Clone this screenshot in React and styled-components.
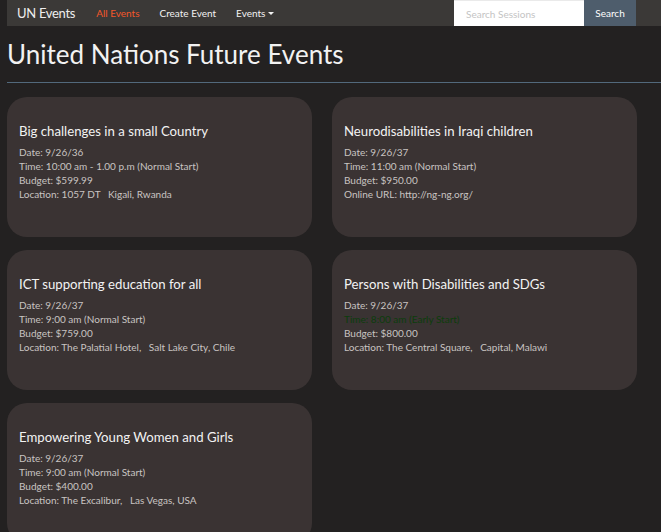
import styled, { createGlobalStyle } from "styled-components";

const GlobalStyle = createGlobalStyle`
  html, body {
    margin: 0;
    padding: 0;
    background: #232121;
    font-family: Lato, "Open Sans", sans-serif;
    color: #eee;
  }
`;

const events = [
  {
    title: "Big challenges in a small Country",
    date: "9/26/36",
    time: "10:00 am - 1.00 p.m (Normal Start)",
    budget: "$599.99",
    place: "Location: 1057 DT\u00a0\u00a0\u00a0Kigali, Rwanda",
  },
  {
    title: "Neurodisabilities in Iraqi children",
    date: "9/26/37",
    time: "11:00 am (Normal Start)",
    budget: "$950.00",
    place: "Online URL: http://ng-ng.org/",
  },
  {
    title: "ICT supporting education for all",
    date: "9/26/37",
    time: "9:00 am (Normal Start)",
    budget: "$759.00",
    place: "Location: The Palatial Hotel,\u00a0\u00a0\u00a0Salt Lake City, Chile",
  },
  {
    title: "Persons with Disabilities and SDGs",
    date: "9/26/37",
    time: "8:00 am (Early Start)",
    early: true,
    budget: "$800.00",
    place: "Location: The Central Square,\u00a0\u00a0\u00a0Capital, Malawi",
  },
  {
    title: "Empowering Young Women and Girls",
    date: "9/26/37",
    time: "9:00 am (Normal Start)",
    budget: "$400.00",
    place: "Location: The Excalibur,\u00a0\u00a0\u00a0Las Vegas, USA",
  },
];

const App = () => {
  return (
    <Page>
      <GlobalStyle />
      <Navbar>
        <Brand>UN Events</Brand>
        <NavLink active>All Events</NavLink>
        <NavLink>Create Event</NavLink>
        <NavLink>
          Events <Caret />
        </NavLink>
        <SearchForm>
          <SearchInput placeholder="Search Sessions" />
          <SearchButton>Search</SearchButton>
        </SearchForm>
      </Navbar>
      <Heading>United Nations Future Events</Heading>
      <Rule />
      <Grid>
        {events.map((e) => (
          <Card key={e.title}>
            <Title>{e.title}</Title>
            <Line>Date: {e.date}</Line>
            <Line early={e.early ? 1 : 0}>Time: {e.time}</Line>
            <Line>Budget: {e.budget}</Line>
            <Line>{e.place}</Line>
          </Card>
        ))}
      </Grid>
    </Page>
  );
};

const Page = styled.div`
  padding-left: 7px;
  min-height: 532px;
`;

const Navbar = styled.nav`
  height: 26px;
  background: #3b3937;
  display: flex;
  align-items: center;
`;

const Brand = styled.div`
  font-size: 13px;
  letter-spacing: -0.3px;
  color: #eee;
  padding: 0 11px 0 10px;
`;

const NavLink = styled.div`
  font-size: 10px;
  color: ${(p) => (p.active ? "#f4572a" : "#f2f2f2")};
  padding: 0 10px;
  display: flex;
  align-items: center;
  gap: 3px;
`;

const Caret = styled.span`
  width: 0;
  height: 0;
  border-left: 3px solid transparent;
  border-right: 3px solid transparent;
  border-top: 3px solid #f2f2f2;
  margin-top: 1px;
`;

const SearchForm = styled.div`
  margin-left: auto;
  margin-right: 25px;
  display: flex;
  height: 100%;
`;

const SearchInput = styled.input`
  width: 130px;
  box-sizing: border-box;
  border: none;
  border-top: 1px solid #eaeaea;
  background: #fff;
  padding: 0 12px;
  font-family: Lato, sans-serif;
  font-size: 10px;
  outline: none;
  &::placeholder {
    color: #c4c4c4;
  }
`;

const SearchButton = styled.button`
  width: 52px;
  border: none;
  background: #4e5d6c;
  color: #fff;
  font-family: Lato, sans-serif;
  font-size: 10px;
  padding: 0;
`;

const Heading = styled.h1`
  margin: 13px 0 0;
  font-size: 26px;
  font-weight: 400;
  line-height: 30px;
  color: #f2f2f2;
`;

const Rule = styled.hr`
  margin: 13px 0 14px;
  border: none;
  border-top: 1px solid #52697c;
`;

const Grid = styled.div`
  display: grid;
  grid-template-columns: 305px 305px;
  column-gap: 20px;
  row-gap: 13px;
`;

const Card = styled.div`
  background: #3a3333;
  border-radius: 20px;
  height: 140px;
  box-sizing: border-box;
  padding: 25px 12px 0;
`;

const Title = styled.div`
  font-size: 13.2px;
  color: #f2f2f2;
  line-height: 18px;
  margin-bottom: 5px;
`;

const Line = styled.div`
  font-size: 10px;
  line-height: 14px;
  color: ${(p) => (p.early ? "#0c3d0c" : "#c9c4c2")};
`;

export default App;
